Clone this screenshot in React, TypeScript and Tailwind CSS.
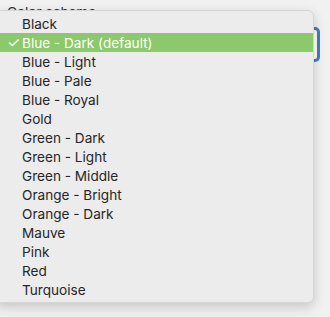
const schemes = [
  "Black",
  "Blue - Dark (default)",
  "Blue - Light",
  "Blue - Pale",
  "Blue - Royal",
  "Gold",
  "Green - Dark",
  "Green - Light",
  "Green - Middle",
  "Orange - Bright",
  "Orange - Dark",
  "Mauve",
  "Pink",
  "Red",
  "Turquoise",
];

const selected = "Blue - Dark (default)";

export default function App() {
  return (
    <div className="relative w-[330px] h-[317px] overflow-hidden bg-[#f1f1f1] font-['Inter',sans-serif] text-[13.6px] text-[#262626]">
      {/* the field behind the open menu */}
      <div className="pl-[7px] pt-[4px] pr-[10px]">
        <label className="block leading-[16px] text-[#333]">Color scheme</label>
        <div className="mt-[7px] h-[35px] rounded-[5px] border-[3px] border-[#3f7fb9] bg-white" />
      </div>

      {/* open dropdown */}
      <ul className="absolute left-[-6px] top-[10px] w-[320px] rounded-[6px] border border-[#d6d6d6] bg-[#ececec] py-[3px] shadow-[0_4px_12px_rgba(0,0,0,0.18)]">
        {schemes.map((s) => (
          <li
            key={s}
            className={
              s === selected
                ? "relative flex h-[19px] items-center pl-[27px] pt-[1px] bg-[#8cc86c] text-white"
                : "relative flex h-[19px] items-center pl-[27px] pt-[1px]"
            }
          >
            {s === selected && (
              <span className="absolute left-[12px] top-[0px] text-[15px] leading-[19px]">✓</span>
            )}
            {s}
          </li>
        ))}
      </ul>
    </div>
  );
}
